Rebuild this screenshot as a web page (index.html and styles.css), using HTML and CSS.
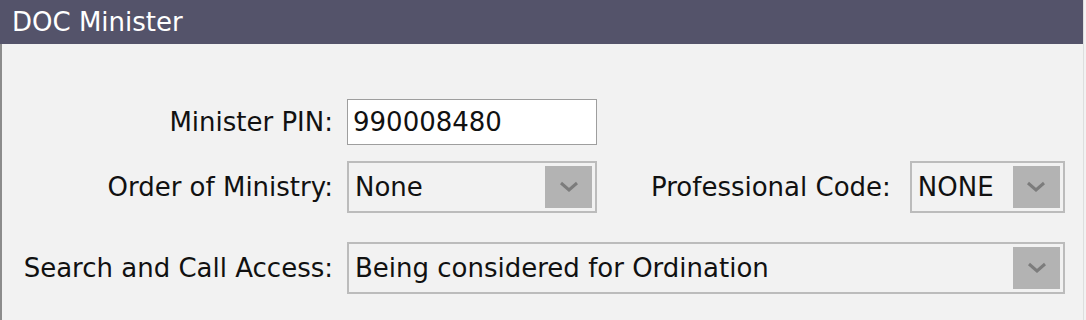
FILE: index.html
```html
<!DOCTYPE html>
<html lang="en">

<head>
    <meta charset="UTF-8">
    <title>DOC Minister</title>
    <link rel="stylesheet" href="styles.css">
</head>

<body>

    <div class="panel">
        <div class="panel-title">DOC Minister</div>
        <div class="panel-body">

            <div class="row">
                <label class="field-label">Minister PIN:</label>
                <input class="text-input" type="text" value="990008480">
            </div>

            <div class="row">
                <label class="field-label">Order of Ministry:</label>
                <div class="dropdown order">
                    <span class="dropdown-value">None</span>
                    <span class="dropdown-btn">
                        <svg width="20" height="12" viewBox="0 0 20 12"><path d="M2 2 L10 9 L18 2" /></svg>
                    </span>
                </div>
                <label class="field-label inline">Professional Code:</label>
                <div class="dropdown code">
                    <span class="dropdown-value">NONE</span>
                    <span class="dropdown-btn">
                        <svg width="20" height="12" viewBox="0 0 20 12"><path d="M2 2 L10 9 L18 2" /></svg>
                    </span>
                </div>
            </div>

            <div class="row last">
                <label class="field-label">Search and Call Access:</label>
                <div class="dropdown wide">
                    <span class="dropdown-value">Being considered for Ordination</span>
                    <span class="dropdown-btn">
                        <svg width="20" height="12" viewBox="0 0 20 12"><path d="M2 2 L10 9 L18 2" /></svg>
                    </span>
                </div>
            </div>

        </div>
    </div>

</body>

</html>
```

FILE: styles.css
```css
* {
    margin: 0;
    padding: 0;
    box-sizing: border-box;
    font-family: 'DejaVu Sans', sans-serif;
}

body {
    background-color: #f2f2f2;
    width: 1086px;
    height: 320px;
    overflow: hidden;
}

.panel {
    width: 1084px;
    height: 320px;
    border-left: 2px solid #8c8c8c;
    border-right: 1px solid #dedede;
    background-color: #f2f2f2;
}

.panel-title {
    height: 44px;
    background-color: #54536a;
    color: #ffffff;
    font-size: 26px;
    line-height: 44px;
    padding-left: 12px;
    margin-left: -2px;
}

.panel-body {
    padding: 55px 0 0 18px;
}

.row {
    display: flex;
    align-items: center;
    margin-bottom: 16px;
}

.row:nth-child(2) {
    margin-bottom: 29px;
}

.field-label {
    width: 313px;
    margin-right: 14px;
    text-align: right;
    font-size: 26px;
    color: #111111;
    white-space: nowrap;
}

.field-label.inline {
    width: auto;
    margin-left: 54px;
    margin-right: 19px;
}

.text-input {
    width: 250px;
    height: 46px;
    border: 1px solid #9e9e9e;
    background-color: #ffffff;
    font-size: 26px;
    color: #111111;
    padding-left: 5px;
    outline: none;
}

.dropdown {
    display: flex;
    align-items: center;
    height: 52px;
    border: 2px solid #bcbcbc;
    background-color: #f2f2f2;
    padding: 0 3px 0 6px;
}

.dropdown.order {
    width: 250px;
}

.dropdown.code {
    width: 155px;
}

.dropdown.wide {
    width: 718px;
}

.dropdown-value {
    flex: 1;
    font-size: 26px;
    color: #111111;
    white-space: nowrap;
}

.dropdown-btn {
    width: 47px;
    height: 42px;
    background-color: #b3b3b3;
    display: flex;
    align-items: center;
    justify-content: center;
}

.dropdown-btn svg path {
    fill: none;
    stroke: #7c7c7c;
    stroke-width: 3;
}
```
